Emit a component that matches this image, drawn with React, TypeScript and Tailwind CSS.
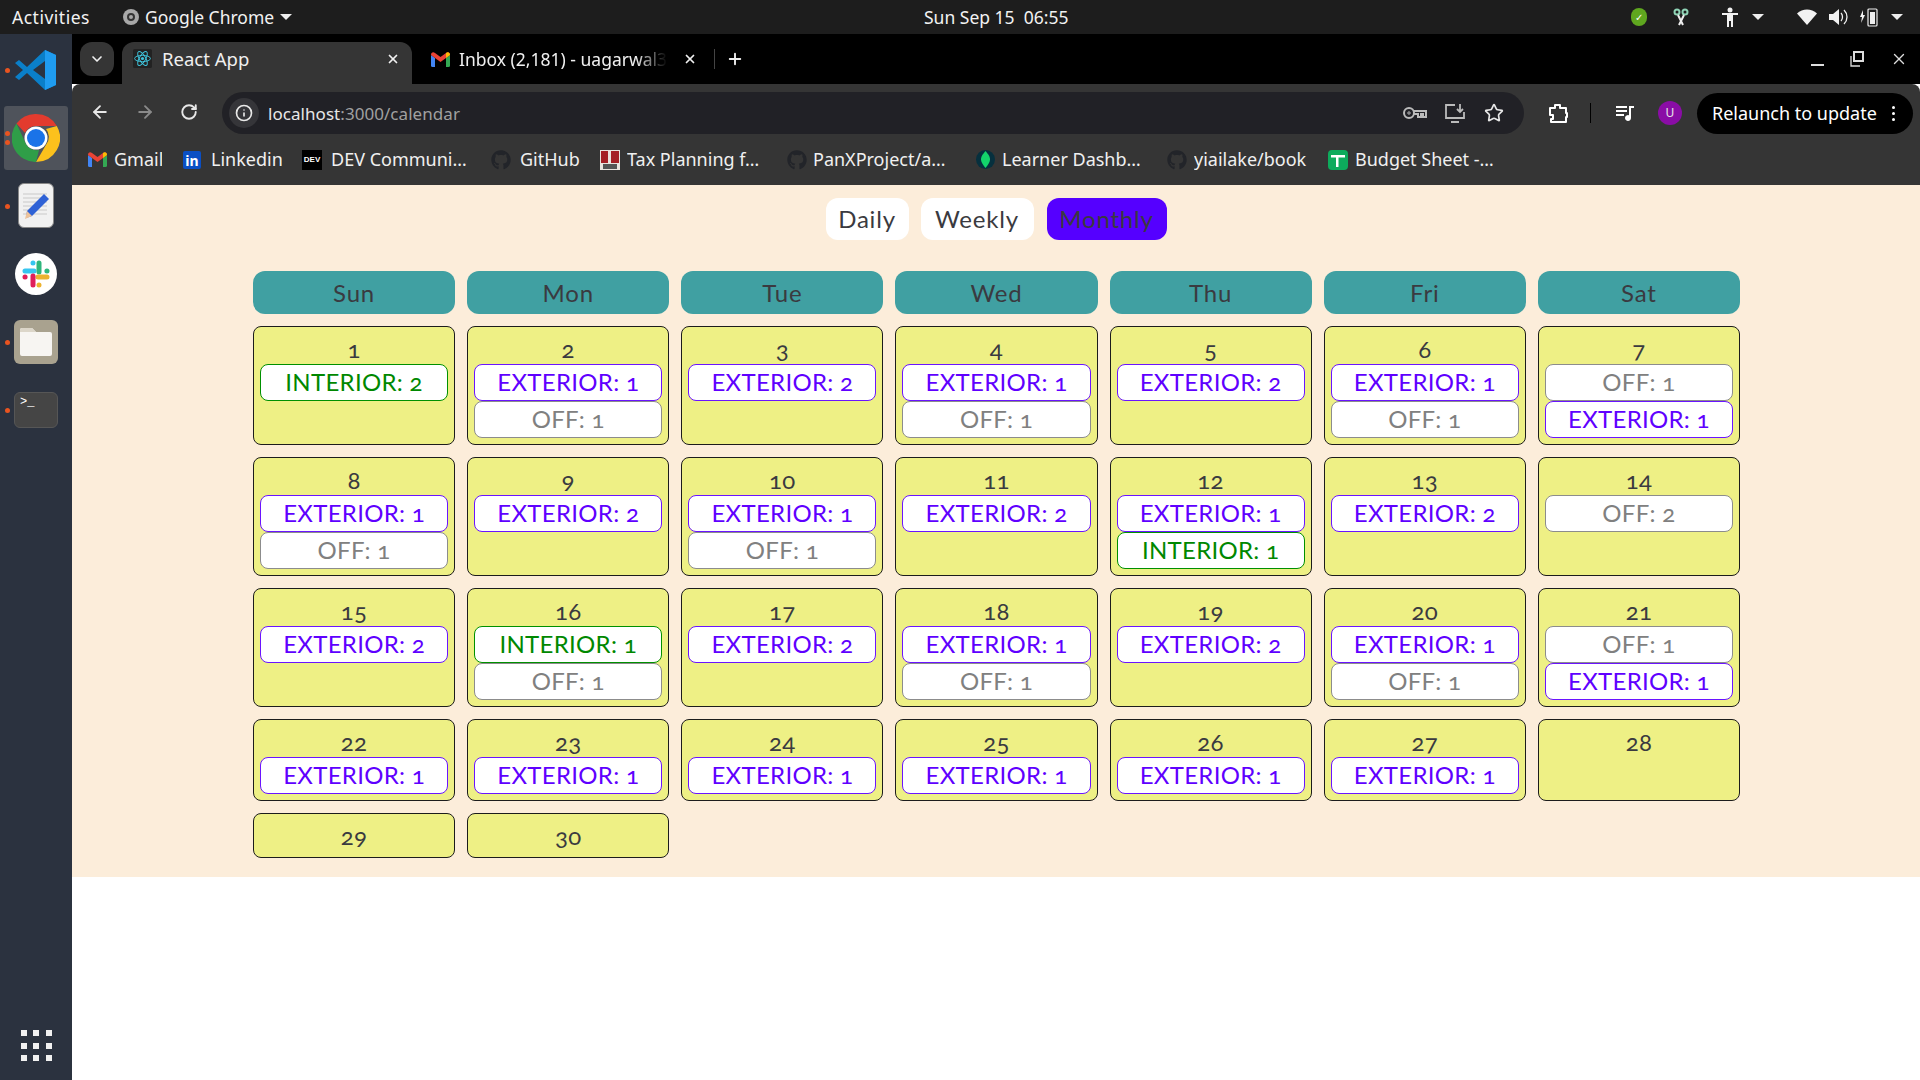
import { ArrowLeft, ArrowRight, ChevronDown, Info, Plus, RotateCw, Star, X } from "lucide-react";
import { FaGithub } from "react-icons/fa";

type Kind = "EXTERIOR" | "INTERIOR" | "OFF";
type Shift = [Kind, number];

const weekDays = ["Sun", "Mon", "Tue", "Wed", "Thu", "Fri", "Sat"];

const days: Shift[][] = [
  [["INTERIOR", 2]],
  [["EXTERIOR", 1], ["OFF", 1]],
  [["EXTERIOR", 2]],
  [["EXTERIOR", 1], ["OFF", 1]],
  [["EXTERIOR", 2]],
  [["EXTERIOR", 1], ["OFF", 1]],
  [["OFF", 1], ["EXTERIOR", 1]],
  [["EXTERIOR", 1], ["OFF", 1]],
  [["EXTERIOR", 2]],
  [["EXTERIOR", 1], ["OFF", 1]],
  [["EXTERIOR", 2]],
  [["EXTERIOR", 1], ["INTERIOR", 1]],
  [["EXTERIOR", 2]],
  [["OFF", 2]],
  [["EXTERIOR", 2]],
  [["INTERIOR", 1], ["OFF", 1]],
  [["EXTERIOR", 2]],
  [["EXTERIOR", 1], ["OFF", 1]],
  [["EXTERIOR", 2]],
  [["EXTERIOR", 1], ["OFF", 1]],
  [["OFF", 1], ["EXTERIOR", 1]],
  [["EXTERIOR", 1]],
  [["EXTERIOR", 1]],
  [["EXTERIOR", 1]],
  [["EXTERIOR", 1]],
  [["EXTERIOR", 1]],
  [["EXTERIOR", 1]],
  [],
  [],
  [],
];

const pillStyles: Record<Kind, string> = {
  EXTERIOR: "border-[#6a14ff] text-[#5f00ff]",
  INTERIOR: "border-[#009000] text-[#008800]",
  OFF: "border-[#8c8c8c] text-[#808080]",
};

function GmailIcon() {
  return (
    <svg width="19" height="15" viewBox="0 0 19 15">
      <path d="M0 3v10.500A1.500 1.500 0 0 0 1.500 15H4V6z" fill="#4285f4" />
      <path d="M15 6v9h2.500a1.500 1.500 0 0 0 1.500-1.500V3z" fill="#34a853" />
      <path d="M0 3l4 3 5.500 4L15 6l4-3c0-2.500-2-3.500-4-2L9.500 5 4 1C2 -.5 0 .5 0 3z" fill="#ea4335" />
      <path d="M15 6l4-3c0-2.500-2-3.500-4-2z" fill="#fbbc04" />
    </svg>
  );
}

function ReactIcon() {
  return (
    <svg width="19" height="19" viewBox="0 0 24 24" fill="none" stroke="#3fc4dc" strokeWidth="1.200">
      <rect width="24" height="24" rx="2" fill="#222" stroke="none" />
      <circle cx="12" cy="12" r="2" fill="#3fc4dc" stroke="none" />
      <ellipse cx="12" cy="12" rx="10" ry="4" />
      <ellipse cx="12" cy="12" rx="10" ry="4" transform="rotate(60 12 12)" />
      <ellipse cx="12" cy="12" rx="10" ry="4" transform="rotate(120 12 12)" />
    </svg>
  );
}

function VsCodeIcon() {
  return (
    <svg width="42" height="42" viewBox="0 0 42 42">
      <path d="M30 1l11 5v30l-11 5L12 24l-8 7-4-3 8-7-8-7 4-3 8 7z" fill="#0a7fc9" />
      <path d="M30 1l11 5v30l-11 5z" fill="#1f9cf0" />
      <path d="M30 12L18 21l12 9z" fill="#2b3340" />
    </svg>
  );
}

function ChromeIcon({ size = 48 }: { size?: number }) {
  return (
    <svg width={size} height={size} viewBox="0 0 48 48">
      <path d="M24 0a24 24 0 0 1 20.800 12H24a12 12 0 0 0-11 7L4.500 9.500A24 24 0 0 1 24 0z" fill="#e33b2e" />
      <path d="M44.800 12A24 24 0 0 1 24 48l10.500-18A12 12 0 0 0 34 15z" fill="#fcc11c" />
      <path d="M24 48A24 24 0 0 1 4.500 9.500L14 30a12 12 0 0 0 13 6z" fill="#2f9e48" />
      <circle cx="24" cy="24" r="11.500" fill="#fff" />
      <circle cx="24" cy="24" r="9" fill="#1a73e8" />
    </svg>
  );
}

function SlackIcon() {
  return (
    <div className="flex h-[42px] w-[42px] items-center justify-center rounded-full bg-white">
      <svg width="28" height="28" viewBox="0 0 28 28" strokeWidth="5" strokeLinecap="round" fill="none">
        <path d="M3 11h9M11 3v.1" stroke="#36c5f0" />
        <path d="M17 3v9M25 11h-.1" stroke="#2eb67d" />
        <path d="M25 17h-9M17 25v-.1" stroke="#ecb22e" />
        <path d="M11 25v-9M3 17h.1" stroke="#e01e5a" />
      </svg>
    </div>
  );
}

function LeafIcon() {
  return (
    <div className="flex h-[19px] w-[19px] items-center justify-center rounded-full bg-[#06303e]">
      <svg width="9" height="17" viewBox="0 0 9 17">
        <path d="M4.500 0C8 4 9 6 9 8.500S7 14 4.500 17C2 14 0 11 0 8.500S1 4 4.500 0z" fill="#13d36b" />
      </svg>
    </div>
  );
}

function SheetsIcon() {
  return (
    <div className="flex h-5 w-5 items-center justify-center rounded-sm bg-[#0dab5c]">
      <svg width="14" height="14" viewBox="0 0 14 14" fill="#fff">
        <rect x="0" y="2" width="14" height="2.500" />
        <rect x="5" y="2" width="2.500" height="12" />
      </svg>
    </div>
  );
}

function TaxIcon() {
  return (
    <svg width="20" height="20" viewBox="0 0 20 20">
      <rect width="20" height="20" fill="#e9e3de" />
      <rect x="1" y="1" width="7" height="12" fill="#a51f25" />
      <rect x="11" y="1" width="8" height="12" fill="#a51f25" />
      <rect x="3" y="14" width="14" height="5" fill="#555" />
    </svg>
  );
}

function Bookmark({ icon, label, width, gap = "ml-[9px]" }: { icon: React.ReactNode; label: string; width: string; gap?: string }) {
  return (
    <div className="flex h-full items-center">
      <div className="flex w-5 shrink-0 items-center justify-center">{icon}</div>
      <span className={`${gap} ${width} overflow-hidden whitespace-nowrap`}>{label}</span>
    </div>
  );
}

function DockDot({ y }: { y: string }) {
  return <span className={`absolute left-[5px] h-[5px] w-[5px] rounded-full bg-[#e95420] ${y}`} />;
}

function Dock() {
  return (
    <aside className="relative flex w-[72px] shrink-0 flex-col items-center bg-[#2b323f] pt-[15px]">
      <VsCodeIcon />
      <DockDot y="top-[34px]" />
      <div className="mt-[15px] flex h-16 w-16 items-center justify-center rounded-[3px] bg-[#4f535b]">
        <ChromeIcon />
      </div>
      <DockDot y="top-[97px]" />
      <DockDot y="top-[106px]" />
      <div className="mt-[13px] flex h-[45px] w-9 items-start justify-center rounded-md border border-[#888] bg-[#f1f1f1] pt-2">
        <svg width="30" height="32" viewBox="0 0 30 32">
          <path d="M2 2h24M2 6h24M2 10h24M2 14h24M2 18h24M2 22h24" stroke="#c9c9c9" strokeWidth="1" />
          <path d="M23 2l5 5L11 24l-6 2 1-7z" fill="#2f62d6" />
          <path d="M6 19l5 5-7 3z" fill="#edc39b" />
        </svg>
      </div>
      <DockDot y="top-[170px]" />
      <div className="mt-[25px]">
        <SlackIcon />
      </div>
      <div className="mt-[25px] flex h-11 w-11 items-center justify-center rounded-md bg-[#a9a28f]">
        <svg width="32" height="28" viewBox="0 0 32 28">
          <path d="M2 0h10l4 4h14a2 2 0 0 1 2 2v20a2 2 0 0 1-2 2H2a2 2 0 0 1-2-2V2a2 2 0 0 1 2-2z" fill="#f7f5f2" />
          <path d="M0 2a2 2 0 0 1 2-2h10l4 4H0z" fill="#dcd6c9" />
        </svg>
      </div>
      <DockDot y="top-[306px]" />
      <div className="mt-[28px] h-9 w-11 rounded-md border border-[#565656] bg-[#454545] px-[5px] font-['Liberation_Mono',monospace] text-[12px] leading-[18px] text-white">
        &gt;_
      </div>
      <DockDot y="top-[374px]" />
      <div className="mt-auto mb-[19px] grid grid-cols-3 gap-[6.500px]">
        {Array.from({ length: 9 }).map((_, i) => (
          <span key={i} className="h-[6px] w-[6px] bg-[#f1f1f1]" />
        ))}
      </div>
    </aside>
  );
}

function TopBar() {
  return (
    <header className="flex h-[34px] items-center bg-[#1d1d1d] text-[17.500px] text-[#f2f2f2]">
      <span className="ml-3 w-[77px] whitespace-nowrap tracking-[0.5px]">Activities</span>
      <div className="ml-[34px] flex h-4 w-4 items-center justify-center rounded-full bg-[#a8a8a8]">
        <span className="h-2 w-2 rounded-full border-2 border-[#333]" />
      </div>
      <span className="ml-[6px] w-[129px] whitespace-nowrap">Google Chrome</span>
      <span className="ml-[6px] h-0 w-0 border-x-[6px] border-t-[6px] border-x-transparent border-t-[#eee]" />
      <span className="ml-[632px] w-[146px] whitespace-nowrap">Sun Sep 15&nbsp; 06:55</span>
      <span className="ml-[561px] h-[18px] w-4 rounded-full bg-[#5fa71f] text-center text-[10px] leading-[18px] text-white">✓</span>
      <svg className="ml-[26px]" width="16" height="18" viewBox="0 0 16 18" fill="none" stroke="#8fd3b5" strokeWidth="2">
        <circle cx="4" cy="4" r="2.500" />
        <circle cx="12" cy="4" r="2.500" />
        <path d="M5 7l5 10M11 7L6 17" stroke="#eee" />
      </svg>
      <svg className="ml-[33px]" width="16" height="20" viewBox="0 0 16 20" fill="#f2f2f2">
        <circle cx="8" cy="3" r="2.500" />
        <path d="M0 6h16v2h-5v12H9v-6H7v6H5V8H0z" />
      </svg>
      <span className="ml-[14px] h-0 w-0 border-x-[6px] border-t-[6px] border-x-transparent border-t-[#eee]" />
      <svg className="ml-[33px]" width="20" height="16" viewBox="0 0 20 16" fill="#f2f2f2">
        <path d="M0 4.500C5.500 -1 14.500 -1 20 4.500L10 16z" />
      </svg>
      <svg className="ml-[12px]" width="20" height="18" viewBox="0 0 20 18" fill="none">
        <path d="M0 6h4l6-5v16l-6-5H0z" fill="#f2f2f2" />
        <path d="M12 5c2 2 2 6 0 8M15 2c4 4 4 10 0 14" stroke="#f2f2f2" strokeWidth="1.300" />
      </svg>
      <svg className="ml-[11px]" width="18" height="20" viewBox="0 0 18 20">
        <path d="M3 3L0 10h2l-1 6 4-8H3z" fill="#f2f2f2" />
        <rect x="8" y="2" width="9" height="17" rx="1" fill="none" stroke="#eee" strokeWidth="1.200" />
        <rect x="10" y="5" width="5" height="12" fill="#eee" />
      </svg>
      <span className="ml-[13px] h-0 w-0 border-x-[6px] border-t-[6px] border-x-transparent border-t-[#eee]" />
    </header>
  );
}

function TabStrip() {
  return (
    <div className="flex h-[50px] bg-black pl-2 pt-2 text-[17.500px] text-[#f0f0f0]">
      <div className="flex h-[34px] w-[34px] items-center justify-center rounded-xl bg-[#353535]">
        <ChevronDown size={16} strokeWidth={2.500} />
      </div>
      <div className="ml-2 flex h-[42px] w-[290px] items-center rounded-t-xl bg-[#353535] pb-[9px] pl-[11px]">
        <ReactIcon />
        <span className="ml-[10px] text-[18.500px]">React App</span>
        <X className="ml-auto mr-[12px]" size={14} strokeWidth={3} />
      </div>
      <div className="ml-[19px] flex h-[34px] items-center">
        <GmailIcon />
        <span className="ml-[9px] w-[208px] overflow-hidden whitespace-nowrap [mask-image:linear-gradient(to_right,black_85%,transparent)]">
          Inbox (2,181) - uagarwal3
        </span>
        <X className="ml-[16px]" size={14} strokeWidth={3} />
        <span className="ml-[17px] h-5 w-px bg-[#444]" />
        <Plus className="ml-[11px]" size={18} strokeWidth={2.500} />
      </div>
      <div className="ml-auto flex h-[34px] items-center pr-3 text-white">
        <span className="mt-3 h-[2px] w-[13px] bg-[#ddd]" />
        <svg className="ml-[26px]" width="14" height="16" viewBox="0 0 14 16" fill="none" stroke="#ddd" strokeWidth="1.300">
          <path d="M1 5v10h9" />
          <rect x="4" y="1" width="9" height="9" strokeWidth="2" />
        </svg>
        <X className="ml-[26px]" size={18} color="#ddd" strokeWidth={1.800} />
      </div>
    </div>
  );
}

function Toolbar() {
  return (
    <div className="flex h-[50px] items-end rounded-t-lg bg-[#353535] text-[#e8e8e8]">
      <div className="flex h-[42px] w-[150px] items-center pb-[2px] pl-[18px]">
        <ArrowLeft size={20} strokeWidth={2.200} />
        <ArrowRight className="ml-[25px] text-[#8a8a8a]" size={20} strokeWidth={2.200} />
        <RotateCw className="ml-[25px]" size={18} strokeWidth={2.500} />
      </div>
      <div className="flex h-[42px] w-[1302px] items-center rounded-full bg-[#212126] pl-[7px] text-[17px]">
        <div className="flex h-[30px] w-[30px] items-center justify-center rounded-full bg-[#353539]">
          <Info size={18} strokeWidth={2.200} />
        </div>
        <span className="ml-[9px] pt-px tracking-[0.05px]">
          localhost<span className="text-[#a0a0a0]">:3000/calendar</span>
        </span>
        <svg className="ml-auto" width="24" height="14" viewBox="0 0 24 14" fill="none" stroke="#bbb" strokeWidth="2">
          <circle cx="6" cy="7" r="5" />
          <circle cx="6" cy="7" r="1.200" strokeWidth="1" />
          <path d="M11 5h12v6h-3V8h-2v3h-3V8h-4" />
        </svg>
        <svg className="ml-[18px]" width="20" height="20" viewBox="0 0 20 20" fill="none" stroke="#bbb" strokeWidth="1.800">
          <path d="M10 2H1v13h18V9M15 1v8M12 6l3 3 3-3M6 19h8" />
        </svg>
        <Star className="ml-[19px] mr-[20px]" size={20} strokeWidth={2} />
      </div>
      <div className="flex h-[42px] flex-1 items-center">
        <svg className="ml-[24px]" width="20" height="20" viewBox="0 0 20 20" fill="none" stroke="#fff" strokeWidth="2">
          <path d="M2 5h5V2h5v3h6v5h1v4h-1v5H3v-3h2v-4H2z" strokeLinejoin="round" />
        </svg>
        <span className="ml-[22px] h-5 w-px bg-black" />
        <svg className="ml-[25px]" width="18" height="18" viewBox="0 0 18 18" fill="#fff">
          <path d="M0 2h11v2H0zM0 6h11v2H0zM0 10h8v2H0zM13 2h5v2h-3v10a3 3 0 1 1-2-2.800z" />
        </svg>
        <div className="ml-[24px] flex h-6 w-6 items-center justify-center rounded-full bg-[#8a0da6] text-[12px]">U</div>
        <div className="ml-[15px] flex h-[41px] w-[216px] items-center rounded-full bg-black pl-[15px] text-[18px] text-white">
          <span className="whitespace-nowrap">Relaunch to update</span>
          <span className="ml-auto mr-[18px] flex flex-col gap-[3px]">
            <span className="h-[3px] w-[3px] rounded-full bg-white" />
            <span className="h-[3px] w-[3px] rounded-full bg-white" />
            <span className="h-[3px] w-[3px] rounded-full bg-white" />
          </span>
        </div>
      </div>
    </div>
  );
}

function Bookmarks() {
  return (
    <div className="flex h-[51px] items-center gap-5 bg-[#353535] pl-[15px] text-[18px] text-[#f0f0f0]">
      <Bookmark icon={<GmailIcon />} label="Gmail" width="w-[48px]" gap="ml-[7px]" />
      <Bookmark
        icon={<div className="h-[18px] w-[18px] rounded-[2px] bg-[#0a4fc4] text-center text-[14px] font-bold leading-[19px] text-white">in</div>}
        label="Linkedin"
        width="w-[71px]"
      />
      <Bookmark
        icon={<div className="h-5 w-5 bg-black text-center font-['Liberation_Sans',sans-serif] text-[8px] font-bold leading-5 text-white">DEV</div>}
        label="DEV Communi…"
        width="w-[140px]"
      />
      <Bookmark icon={<FaGithub size={20} color="#222429" />} label="GitHub" width="w-[60px]" />
      <Bookmark icon={<TaxIcon />} label="Tax Planning f…" width="w-[140px]" gap="ml-[7px]" />
      <Bookmark icon={<FaGithub size={20} color="#222429" />} label="PanXProject/a…" width="w-[142px]" gap="ml-[6px]" />
      <Bookmark icon={<LeafIcon />} label="Learner Dashb…" width="w-[145px]" gap="ml-[7px]" />
      <Bookmark icon={<FaGithub size={20} color="#222429" />} label="yiailake/book" width="w-[114px]" gap="ml-[7px]" />
      <Bookmark icon={<SheetsIcon />} label="Budget Sheet -…" width="w-[145px]" gap="ml-[7px]" />
    </div>
  );
}

function Calendar() {
  return (
    <section className="bg-[#fcedda] pb-[19px] pt-[13px] font-['Lato',sans-serif] text-[24px] tracking-[0.3px] text-[#3a3a40] [font-feature-settings:'onum']">
      <div className="flex justify-center tracking-[0.8px]">
        <button className="h-[42px] w-[83px] rounded-xl bg-white">Daily</button>
        <button className="ml-3 h-[42px] w-[113px] rounded-xl bg-white">Weekly</button>
        <button className="ml-[13px] h-[42px] w-[120px] rounded-xl bg-[#5500ff]">Monthly</button>
      </div>
      <div className="ml-[181px] mt-[31px] grid w-[1487px] grid-cols-7 gap-3">
        {weekDays.map((d) => (
          <div key={d} className="h-[43px] rounded-xl bg-[#40a0a2] text-center leading-[44px] tracking-[0.8px]">
            {d}
          </div>
        ))}
        {days.map((shifts, i) => (
          <div key={i} className="rounded-lg border border-[#1c1c1c] bg-[#eef085] p-[6px] text-center">
            <div className="h-[31px] leading-[32px]">{i + 1}</div>
            {shifts.map(([kind, count]) => (
              <div key={kind} className={`h-[37px] rounded-lg border bg-white leading-[33px] ${pillStyles[kind]}`}>
                {kind}: {count}
              </div>
            ))}
          </div>
        ))}
      </div>
    </section>
  );
}

export default function App() {
  return (
    <div className="flex h-[1080px] flex-col overflow-hidden bg-white font-['Noto_Sans',sans-serif]">
      <TopBar />
      <div className="flex flex-1">
        <Dock />
        <main className="flex flex-1 flex-col">
          <TabStrip />
          <Toolbar />
          <Bookmarks />
          <Calendar />
        </main>
      </div>
    </div>
  );
}
